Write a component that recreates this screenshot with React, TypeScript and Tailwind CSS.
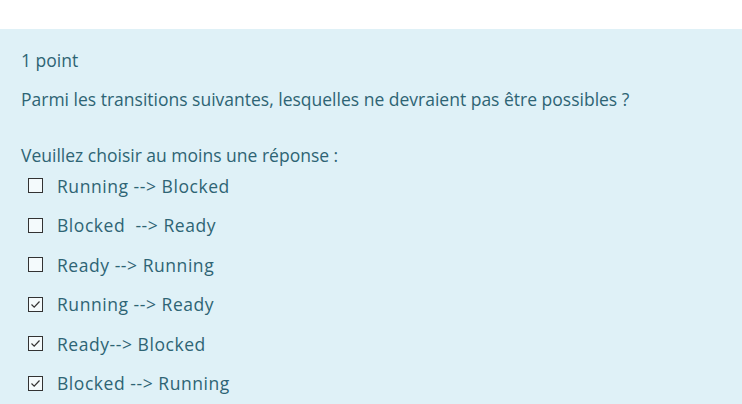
import React from "react";

const options = [
  { label: "Running --> Blocked", checked: false },
  { label: "Blocked\u00a0 --> Ready", checked: false },
  { label: "Ready --> Running", checked: false },
  { label: "Running --> Ready", checked: true },
  { label: "Ready--> Blocked", checked: true },
  { label: "Blocked --> Running", checked: true },
];

const Box = ({ checked }: { checked: boolean }) => (
  <span className="w-[15px] h-[15px] border border-[#333] bg-[#f4fafc] flex items-center justify-center">
    {checked && (
      <svg width="11" height="11" viewBox="0 0 11 11">
        <path d="M1.5 5.5 L4.2 8.2 L9.5 2.5" fill="none" stroke="#333" strokeWidth="1.2" />
      </svg>
    )}
  </span>
);

const App = () => {
  return (
    <div className="w-[742px] h-[404px] bg-white overflow-hidden" style={{ fontFamily: '"Open Sans", sans-serif' }}>
      <div className="h-[29px]" />
      <div className="bg-[#dff1f7] h-[375px] px-[21px] pt-[19px] text-[#2e6474] text-[17.5px]">
        <div className="leading-[24px]">1 point</div>
        <div className="leading-[24px] mt-[15px]">Parmi les transitions suivantes, lesquelles ne devraient pas être possibles ?</div>
        <div className="leading-[24px] mt-[32px]">Veuillez choisir au moins une réponse :</div>
        <div className="flex flex-col -mt-[1px]">
          {options.map((o) => (
            <div key={o.label} className="flex items-center h-[39.5px] pl-[7px]">
              <Box checked={o.checked} />
              <span className="ml-[14px] tracking-[0.55px]">{o.label}</span>
            </div>
          ))}
        </div>
      </div>
    </div>
  );
};

export default App;
